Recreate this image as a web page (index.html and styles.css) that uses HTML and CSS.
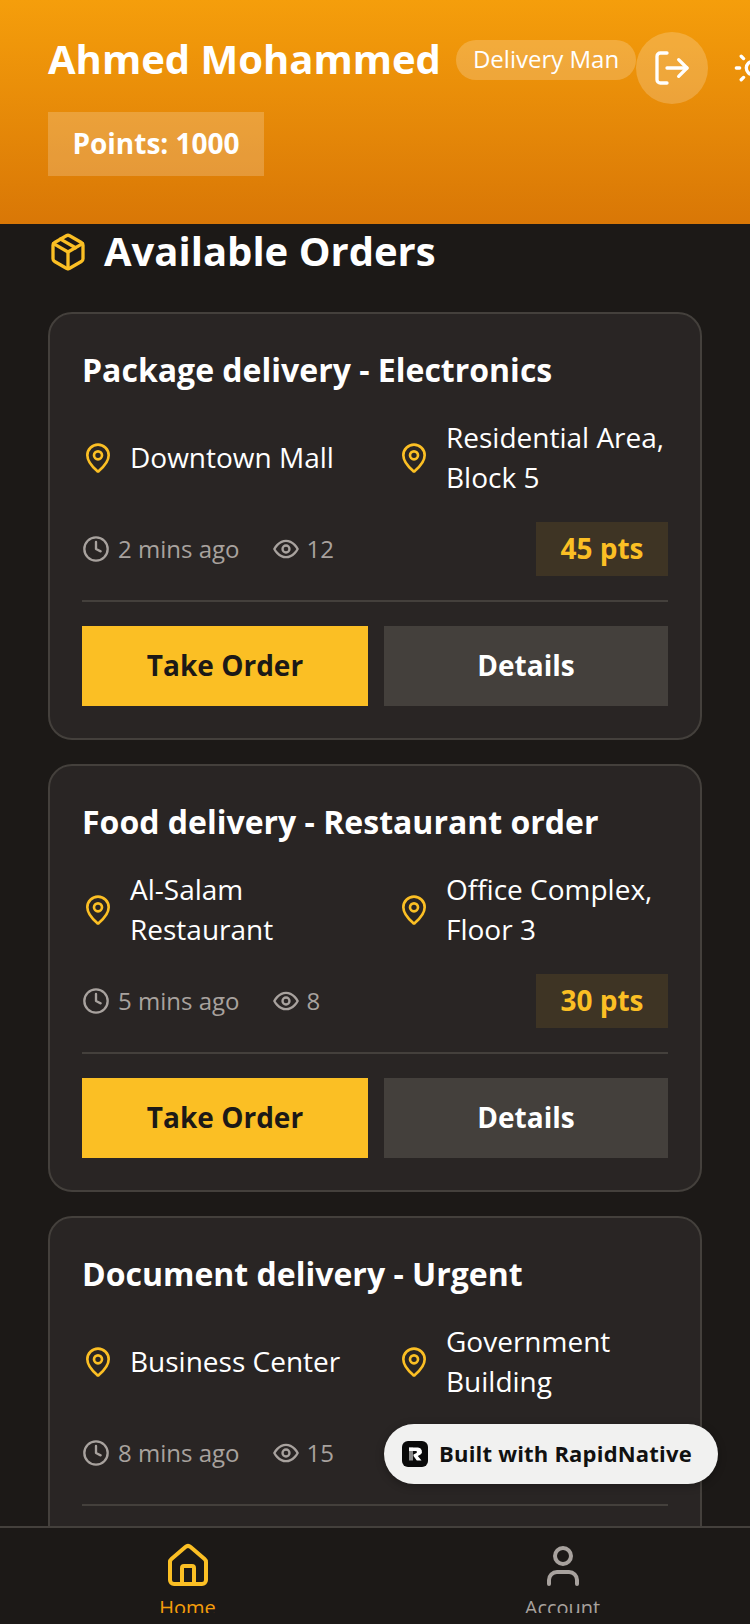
FILE: index.html
```html
<!DOCTYPE html>
<html lang="en">
<head>
  <meta charset="UTF-8" />
  <title>Available Orders</title>
  <link rel="stylesheet" href="styles.css">
</head>
<body>
  <!-- shared icons -->
  <svg class="sprite">
    <symbol id="pin" viewBox="0 0 24 24"><path d="M20 10c0 4.993-5.539 10.193-7.399 11.799a1 1 0 0 1-1.202 0C9.539 20.193 4 14.993 4 10a8 8 0 0 1 16 0"/><circle cx="12" cy="10" r="3"/></symbol>
    <symbol id="clock" viewBox="0 0 24 24"><circle cx="12" cy="12" r="10"/><path d="M12 6v6l4 2"/></symbol>
    <symbol id="eye" viewBox="0 0 24 24"><path d="M2 12s3.600-7 10-7 10 7 10 7-3.600 7-10 7-10-7-10-7z"/><circle cx="12" cy="12" r="3"/></symbol>
  </svg>

  <div class="app">
    <header class="header">
      <div class="header-top">
        <span class="name">Ahmed Mohammed</span>
        <span class="role">Delivery Man</span>
        <button class="round-btn">
          <svg class="icon-40" viewBox="0 0 24 24"><path d="M9 21H5a2 2 0 0 1-2-2V5a2 2 0 0 1 2-2h4"/><path d="M16 17l5-5-5-5"/><path d="M21 12H9"/></svg>
        </button>
        <button class="round-btn plain">
          <svg class="icon-40" viewBox="0 0 24 24"><circle cx="12" cy="12" r="4"/><path d="M12 2v2M12 20v2M4.930 4.930l1.410 1.410M17.660 17.660l1.410 1.410M2 12h2M20 12h2M6.340 17.660l-1.410 1.410M19.070 4.930l-1.410 1.410"/></svg>
        </button>
      </div>
      <div class="points">Points: 1000</div>
    </header>

    <main class="content">
      <h1 class="heading">
        <svg class="icon-40 yellow" viewBox="0 0 24 24"><path d="M7.500 4.270l9 5.150"/><path d="M21 8a2 2 0 0 0-1-1.730l-7-4a2 2 0 0 0-2 0l-7 4A2 2 0 0 0 3 8v8a2 2 0 0 0 1 1.730l7 4a2 2 0 0 0 2 0l7-4A2 2 0 0 0 21 16z"/><path d="M3.300 7l8.700 5 8.700-5"/><path d="M12 22V12"/></svg>
        Available Orders
      </h1>

      <section class="card">
        <h2 class="card-title">Package delivery - Electronics</h2>
        <div class="route">
          <div class="place">
            <svg class="icon-32 yellow"><use href="#pin"/></svg>
            <span>Downtown Mall</span>
          </div>
          <div class="place">
            <svg class="icon-32 yellow"><use href="#pin"/></svg>
            <span>Residential Area, Block 5</span>
          </div>
        </div>
        <div class="meta">
          <svg class="icon-28"><use href="#clock"/></svg>
          <span class="meta-text">2 mins ago</span>
          <svg class="icon-28 eye-icon"><use href="#eye"/></svg>
          <span class="meta-text">12</span>
          <span class="pts">45 pts</span>
        </div>
        <div class="actions">
          <button class="btn btn-take">Take Order</button>
          <button class="btn btn-details">Details</button>
        </div>
      </section>

      <section class="card">
        <h2 class="card-title">Food delivery - Restaurant order</h2>
        <div class="route">
          <div class="place">
            <svg class="icon-32 yellow"><use href="#pin"/></svg>
            <span>Al-Salam Restaurant</span>
          </div>
          <div class="place">
            <svg class="icon-32 yellow"><use href="#pin"/></svg>
            <span>Office Complex, Floor 3</span>
          </div>
        </div>
        <div class="meta">
          <svg class="icon-28"><use href="#clock"/></svg>
          <span class="meta-text">5 mins ago</span>
          <svg class="icon-28 eye-icon"><use href="#eye"/></svg>
          <span class="meta-text">8</span>
          <span class="pts">30 pts</span>
        </div>
        <div class="actions">
          <button class="btn btn-take">Take Order</button>
          <button class="btn btn-details">Details</button>
        </div>
      </section>

      <section class="card">
        <h2 class="card-title">Document delivery - Urgent</h2>
        <div class="route">
          <div class="place">
            <svg class="icon-32 yellow"><use href="#pin"/></svg>
            <span>Business Center</span>
          </div>
          <div class="place">
            <svg class="icon-32 yellow"><use href="#pin"/></svg>
            <span>Government Building</span>
          </div>
        </div>
        <div class="meta">
          <svg class="icon-28"><use href="#clock"/></svg>
          <span class="meta-text">8 mins ago</span>
          <svg class="icon-28 eye-icon"><use href="#eye"/></svg>
          <span class="meta-text">15</span>
        </div>
        <div class="actions">
          <button class="btn btn-take">Take Order</button>
          <button class="btn btn-details">Details</button>
        </div>
      </section>
    </main>

    <nav class="tabbar">
      <div class="tab active">
        <svg class="icon-48" viewBox="0 0 24 24"><path d="M15 21v-8a1 1 0 0 0-1-1h-4a1 1 0 0 0-1 1v8"/><path d="M3 10a2 2 0 0 1 .709-1.528l7-5.999a2 2 0 0 1 2.582 0l7 5.999A2 2 0 0 1 21 10v9a2 2 0 0 1-2 2H5a2 2 0 0 1-2-2z"/></svg>
        <span class="tab-label">Home</span>
      </div>
      <div class="tab">
        <svg class="icon-48" viewBox="0 0 24 24"><path d="M19 21v-2a4 4 0 0 0-4-4H9a4 4 0 0 0-4 4v2"/><circle cx="12" cy="7" r="4"/></svg>
        <span class="tab-label">Account</span>
      </div>
    </nav>

    <div class="built">
      <svg class="built-logo" viewBox="0 0 26 26">
        <rect width="26" height="26" rx="6"/>
        <path class="logo-stem" d="M7 6.500h4v13H7z"/>
        <path class="logo-r" d="M7 6.500h9a4 4 0 0 1 2.500 7.100L15.800 15l3.700 4.500h-4.700L11.500 15v-1.500l3-1.600c.8-.5.5-1.800-.5-1.800H7z"/>
      </svg>
      <span class="built-text">Built with RapidNative</span>
    </div>
  </div>
</body>
</html>
```

FILE: styles.css
```css
* {
  box-sizing: border-box;
}

body {
  margin: 0;
  font-family: "Open Sans", "Noto Sans", sans-serif;
  background-color: #1c1917;
}

svg {
  fill: none;
  stroke: currentColor;
  stroke-width: 2;
  stroke-linecap: round;
  stroke-linejoin: round;
  flex-shrink: 0;
}

.sprite {
  display: none;
}

.app {
  position: relative;
  width: 750px;
  height: 1624px;
  overflow: hidden;
  display: flex;
  flex-direction: column;
}

.icon-28 { width: 28px; height: 28px; }
.icon-32 { width: 32px; height: 32px; }
.icon-40 { width: 40px; height: 40px; }
.icon-48 { width: 48px; height: 48px; }
.yellow { color: #fbbf24; }

.header {
  flex: none;
  height: 224px;
  padding: 32px 0 0 48px;
  background: linear-gradient(#f59e0b, #d97706);
  overflow: hidden;
}

.header-top {
  display: flex;
  align-items: flex-start;
  height: 72px;
}

.name {
  color: #fff;
  font-size: 40px;
  font-weight: 700;
  line-height: 54px;
  white-space: nowrap;
}

.role {
  flex: none;
  margin: 8px 0 0 15px;
  padding: 0 17px;
  height: 40px;
  line-height: 38px;
  border-radius: 20px;
  background: rgba(255, 255, 255, 0.2);
  color: #fff;
  font-size: 24px;
  white-space: nowrap;
}

.round-btn {
  flex: none;
  width: 72px;
  height: 72px;
  margin-left: 0;
  padding: 0;
  border: none;
  border-radius: 50%;
  background: rgba(255, 255, 255, 0.2);
  color: #fff;
  display: flex;
  align-items: center;
  justify-content: center;
}

.round-btn.plain {
  margin-left: 9px;
  background: none;
}

.points {
  width: 216px;
  height: 64px;
  margin-top: 8px;
  background: rgba(255, 255, 255, 0.2);
  color: #fff;
  font-size: 28px;
  font-weight: 700;
  line-height: 62px;
  text-align: center;
}

.content {
  flex: 1;
  min-height: 0;
  overflow: hidden;
  padding: 0 48px;
}

.heading {
  display: flex;
  align-items: center;
  gap: 16px;
  height: 52px;
  margin: 0 0 36px;
  color: #fff;
  font-size: 40px;
  font-weight: 700;
}

.heading svg {
  margin-top: 4px;
}

.card {
  height: 428px;
  margin-bottom: 24px;
  padding: 32px;
  border: 2px solid #44403c;
  border-radius: 24px;
  background-color: #292524;
}

.card-title {
  margin: 0;
  height: 48px;
  color: #fff;
  font-size: 32px;
  font-weight: 700;
  line-height: 48px;
}

.route {
  display: grid;
  grid-template-columns: 300px 1fr;
  gap: 16px;
  margin-top: 24px;
}

.place {
  min-width: 0;
  display: flex;
  align-items: center;
  gap: 16px;
  height: 80px;
  color: #fff;
  font-size: 28px;
  line-height: 40px;
}

.place span {
  margin-top: -2px;
}

.meta {
  display: flex;
  align-items: center;
  height: 54px;
  margin-top: 24px;
  color: #a8a29e;
  font-size: 24px;
}

.meta-text {
  margin: -2px 0 0 8px;
}

.eye-icon {
  margin: 0 -2px 0 33px;
}

.pts {
  margin-left: auto;
  width: 132px;
  height: 54px;
  background: rgba(251, 191, 36, 0.1);
  color: #fbbf24;
  font-size: 28px;
  font-weight: 700;
  line-height: 52px;
  text-align: center;
}

.actions {
  display: flex;
  gap: 16px;
  margin-top: 24px;
  padding-top: 24px;
  border-top: 2px solid #44403c;
}

.btn {
  height: 80px;
  padding: 0 0 2px;
  border: none;
  font-family: inherit;
  font-size: 28px;
  font-weight: 700;
}

.btn-take {
  flex: 286 1 0;
  background-color: #fbbf24;
  color: #1c1917;
}

.btn-details {
  flex: 284 1 0;
  background-color: #44403c;
  color: #fff;
}

.tabbar {
  flex: none;
  height: 98px;
  display: flex;
  border-top: 2px solid #44403c;
  background-color: #1c1917;
}

/* labels get cut by the bar, same as the app */
.tab {
  flex: 1;
  height: 85px;
  overflow: hidden;
  display: flex;
  flex-direction: column;
  align-items: center;
  padding-top: 14px;
  color: #a8a29e;
  font-size: 20px;
}

.tab.active {
  color: #fbbf24;
}

.tab-label {
  margin-top: 4px;
  line-height: 28px;
}

.tab.active .tab-label {
  color: #f59e0b;
}

.built {
  position: absolute;
  left: 384px;
  top: 1424px;
  width: 334px;
  height: 60px;
  display: flex;
  align-items: center;
  gap: 11px;
  padding-left: 18px;
  border-radius: 30px;
  background-color: #f1f1f0;
  box-shadow: 0 2px 8px rgba(0, 0, 0, 0.3);
  color: #111;
  font-size: 22px;
  font-weight: 700;
  letter-spacing: 0.2px;
  white-space: nowrap;
}

.built-text {
  margin-top: -2px;
}

.built-logo {
  width: 26px;
  height: 26px;
  fill: #0a0a0a;
  stroke: none;
}

.logo-r {
  fill: #fff;
}

.logo-stem {
  fill: #8a8a8a;
}
```
